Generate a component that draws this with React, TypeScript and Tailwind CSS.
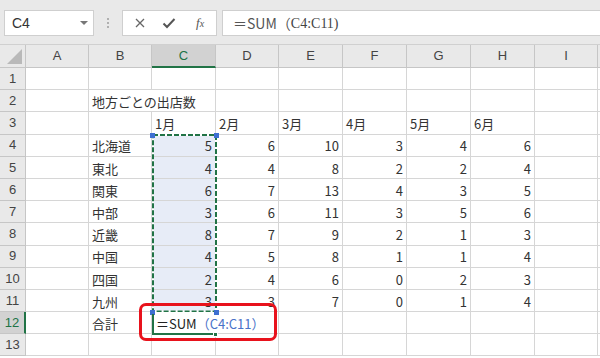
import React from "react";

const COLS = ["A", "B", "C", "D", "E", "F", "G", "H", "I"];
const GREEN = "#217346";

type Row = { label?: string; vals?: (number | string)[] };

const data: Record<number, Row> = {
  4: { label: "北海道", vals: [5, 6, 10, 3, 4, 6] },
  5: { label: "東北", vals: [4, 4, 8, 2, 2, 4] },
  6: { label: "関東", vals: [6, 7, 13, 4, 3, 5] },
  7: { label: "中部", vals: [3, 6, 11, 3, 5, 6] },
  8: { label: "近畿", vals: [8, 7, 9, 2, 1, 3] },
  9: { label: "中国", vals: [4, 5, 8, 1, 1, 4] },
  10: { label: "四国", vals: [2, 4, 6, 0, 2, 3] },
  11: { label: "九州", vals: [3, 3, 7, 0, 1, 4] },
};

const cellBase =
  "border-r border-b border-[#d6d6d6] text-[13px] text-[#333] flex items-center pt-[2px] whitespace-nowrap";

function Cell({
  children,
  right,
  fill,
  span,
}: {
  children?: React.ReactNode;
  right?: boolean;
  fill?: boolean;
  span?: boolean;
}) {
  return (
    <div
      className={`${cellBase} ${right ? "justify-end pr-[3px]" : "justify-start pl-[3px]"} ${
        fill ? "bg-[#e7ecf7]" : "bg-white"
      } ${span ? "col-span-2" : ""}`}
    >
      {children}
    </div>
  );
}

function RowHeader({ n, active }: { n: number; active?: boolean }) {
  return (
    <div
      className={`flex items-center justify-center text-[13px] border-b border-[#c6c6c6] ${
        active
          ? "bg-[#d2d2d2] text-[#217346] border-r-2 border-r-[#217346]"
          : "bg-[#e9e9e9] text-[#444] border-r border-r-[#c6c6c6]"
      }`}
      style={{ fontFamily: "'Liberation Sans', Arial, sans-serif" }}
    >
      {n}
    </div>
  );
}

export default function App() {
  const rows: React.ReactNode[] = [];
  for (let r = 1; r <= 13; r++) {
    const cells: React.ReactNode[] = [];
    cells.push(<RowHeader key={`h${r}`} n={r} active={r === 12} />);
    if (r === 2) {
      cells.push(<Cell key="a" />);
      cells.push(
        <Cell key="b" span>
          地方ごとの出店数
        </Cell>
      );
      for (let c = 3; c < 9; c++) cells.push(<Cell key={c} />);
    } else if (r === 3) {
      cells.push(<Cell key="a" />);
      cells.push(<Cell key="b" />);
      ["1月", "2月", "3月", "4月", "5月", "6月"].forEach((m) =>
        cells.push(<Cell key={m}>{m}</Cell>)
      );
      cells.push(<Cell key="i" />);
    } else if (data[r]) {
      const d = data[r];
      cells.push(<Cell key="a" />);
      cells.push(<Cell key="b">{d.label}</Cell>);
      d.vals!.forEach((v, i) =>
        cells.push(
          <Cell key={i} right fill={i === 0}>
            {v}
          </Cell>
        )
      );
      cells.push(<Cell key="i" />);
    } else if (r === 12) {
      cells.push(<Cell key="a" />);
      cells.push(<Cell key="b">合計</Cell>);
      cells.push(
        <Cell key="c" span>
          <span className="pl-[1px] text-[13px] text-[#222]">＝SUM</span>
          <span className="text-[13px] text-[#4a72c8]">（C4:C11）</span>
        </Cell>
      );
      for (let c = 4; c < 9; c++) cells.push(<Cell key={c} />);
    } else {
      for (let c = 0; c < 9; c++) cells.push(<Cell key={c} />);
    }
    cells.push(<div key="end" className="bg-white border-b border-[#d6d6d6]" />);
    rows.push(<React.Fragment key={r}>{cells}</React.Fragment>);
  }

  const rowTop = (r: number) => 23 + (r - 1) * 22.2;

  return (
    <div
      className="w-[600px] h-[358px] overflow-hidden bg-white flex flex-col"
      style={{ fontFamily: "'Noto Sans CJK JP', 'Noto Sans', sans-serif" }}
    >
      {/* Formula bar */}
      <div className="h-[45px] bg-[#e9e9e9] flex items-start pt-[10px] border-b border-[#d0d0d0] shrink-0">
        <div className="ml-[4px] w-[90px] h-[26px] bg-white border border-[#cfcfcf] flex items-center justify-between pl-[7px] pr-[5px]">
          <span
            className="text-[14px] text-[#333]"
            style={{ fontFamily: "'Liberation Sans', Arial, sans-serif" }}
          >
            C4
          </span>
          <span className="w-0 h-0 border-l-[4px] border-r-[4px] border-t-[4px] border-l-transparent border-r-transparent border-t-[#777]" />
        </div>
        <div className="w-[28px] h-[26px] flex flex-col items-center justify-center gap-[2px]">
          <span className="w-[2px] h-[2px] bg-[#b0b0b0]" />
          <span className="w-[2px] h-[2px] bg-[#b0b0b0]" />
          <span className="w-[2px] h-[2px] bg-[#b0b0b0]" />
        </div>
        <div className="w-[95px] h-[26px] bg-white border border-[#cfcfcf] flex items-center pl-[11px]">
          <svg width="12" height="12" viewBox="0 0 12 12">
            <path d="M2 2 L10 10 M10 2 L2 10" stroke="#666" strokeWidth="1.3" fill="none" />
          </svg>
          <svg width="14" height="12" viewBox="0 0 14 12" className="ml-[16px]">
            <path d="M1.5 6.5 L5 10 L12.5 2" stroke="#555" strokeWidth="2" fill="none" />
          </svg>
          <span
            className="ml-[20px] text-[13px] italic text-[#555]"
            style={{ fontFamily: "'Liberation Serif', 'Times New Roman', serif" }}
          >
            f<span className="text-[10px]">x</span>
          </span>
        </div>
        <div className="ml-[5px] flex-1 h-[26px] bg-white border border-[#cfcfcf] border-r-0 flex items-center pl-[10px] whitespace-nowrap">
          <span className="text-[14px] text-[#555]">＝SUM（</span>
          <span
            className="text-[14px] text-[#444]"
            style={{ fontFamily: "'Liberation Serif', 'Times New Roman', serif" }}
          >
            C4:C11)
          </span>
        </div>
      </div>

      {/* Grid */}
      <div className="relative flex-1">
        <div className="grid grid-cols-[26px_63px_63px_64px_63px_64px_64px_64px_64px_63px_2px] grid-rows-[23px_repeat(13,22.2px)]">
          {/* header row */}
          <div className="bg-[#e9e9e9] border-r border-b border-[#c6c6c6] relative">
            <svg className="absolute right-[3px] bottom-[3px]" width="15" height="15" viewBox="0 0 15 15">
              <path d="M15 0 L15 15 L0 15 Z" fill="#b9b9b9" />
            </svg>
          </div>
          {COLS.map((c) => (
            <div
              key={c}
              className={`flex items-center justify-center text-[13px] border-r border-[#c6c6c6] ${
                c === "C"
                  ? "bg-[#d2d2d2] text-[#217346] border-b-2 border-b-[#217346]"
                  : "bg-[#e9e9e9] text-[#444] border-b border-b-[#c6c6c6]"
              }`}
              style={{ fontFamily: "'Liberation Sans', Arial, sans-serif" }}
            >
              {c}
            </div>
          ))}
          <div className="bg-[#e9e9e9] border-b border-[#c6c6c6]" />
          {rows}
        </div>

        {/* Marching ants around C4:C11 */}
        <svg
          className="absolute"
          style={{ left: 152, top: rowTop(4) - 1, width: 65, height: 8 * 22.2 + 1 }}
          viewBox={`0 0 65 ${8 * 22.2 + 1}`}
        >
          <rect x="1" y="1" width="63" height={8 * 22.2 - 1} fill="none" stroke="#ffffff" strokeWidth="2" />
          <rect
            x="1"
            y="1"
            width="63"
            height={8 * 22.2 - 1}
            fill="none"
            stroke={GREEN}
            strokeWidth="2"
            strokeDasharray="5 2"
          />
        </svg>
        {/* range handles */}
        {[
          [150, rowTop(4) - 2],
          [214, rowTop(4) - 2],
          [150, rowTop(12) - 2],
          [214, rowTop(12) - 2],
        ].map(([x, y], i) => (
          <div
            key={i}
            className="absolute w-[5px] h-[5px] bg-[#3d6fd1]"
            style={{ left: x, top: y }}
          />
        ))}
        {/* Active cell C12 */}
        <div
          className="absolute w-[2px] bg-[#217346]"
          style={{ left: 152, top: rowTop(12) + 2, height: 20.5 }}
        />
        <div
          className="absolute h-[2px] bg-[#217346]"
          style={{ left: 152, top: rowTop(12) + 20.8, width: 63 }}
        />
        <div
          className="absolute w-[5px] h-[5px] bg-[#217346] border border-white"
          style={{ left: 213, top: rowTop(12) + 19.5 }}
        />

        {/* Red highlight box */}
        <div className="absolute left-[139px] top-[258px] w-[138px] h-[38px] border-[3px] border-[#e8121c] rounded-[7px]" />
      </div>
    </div>
  );
}
